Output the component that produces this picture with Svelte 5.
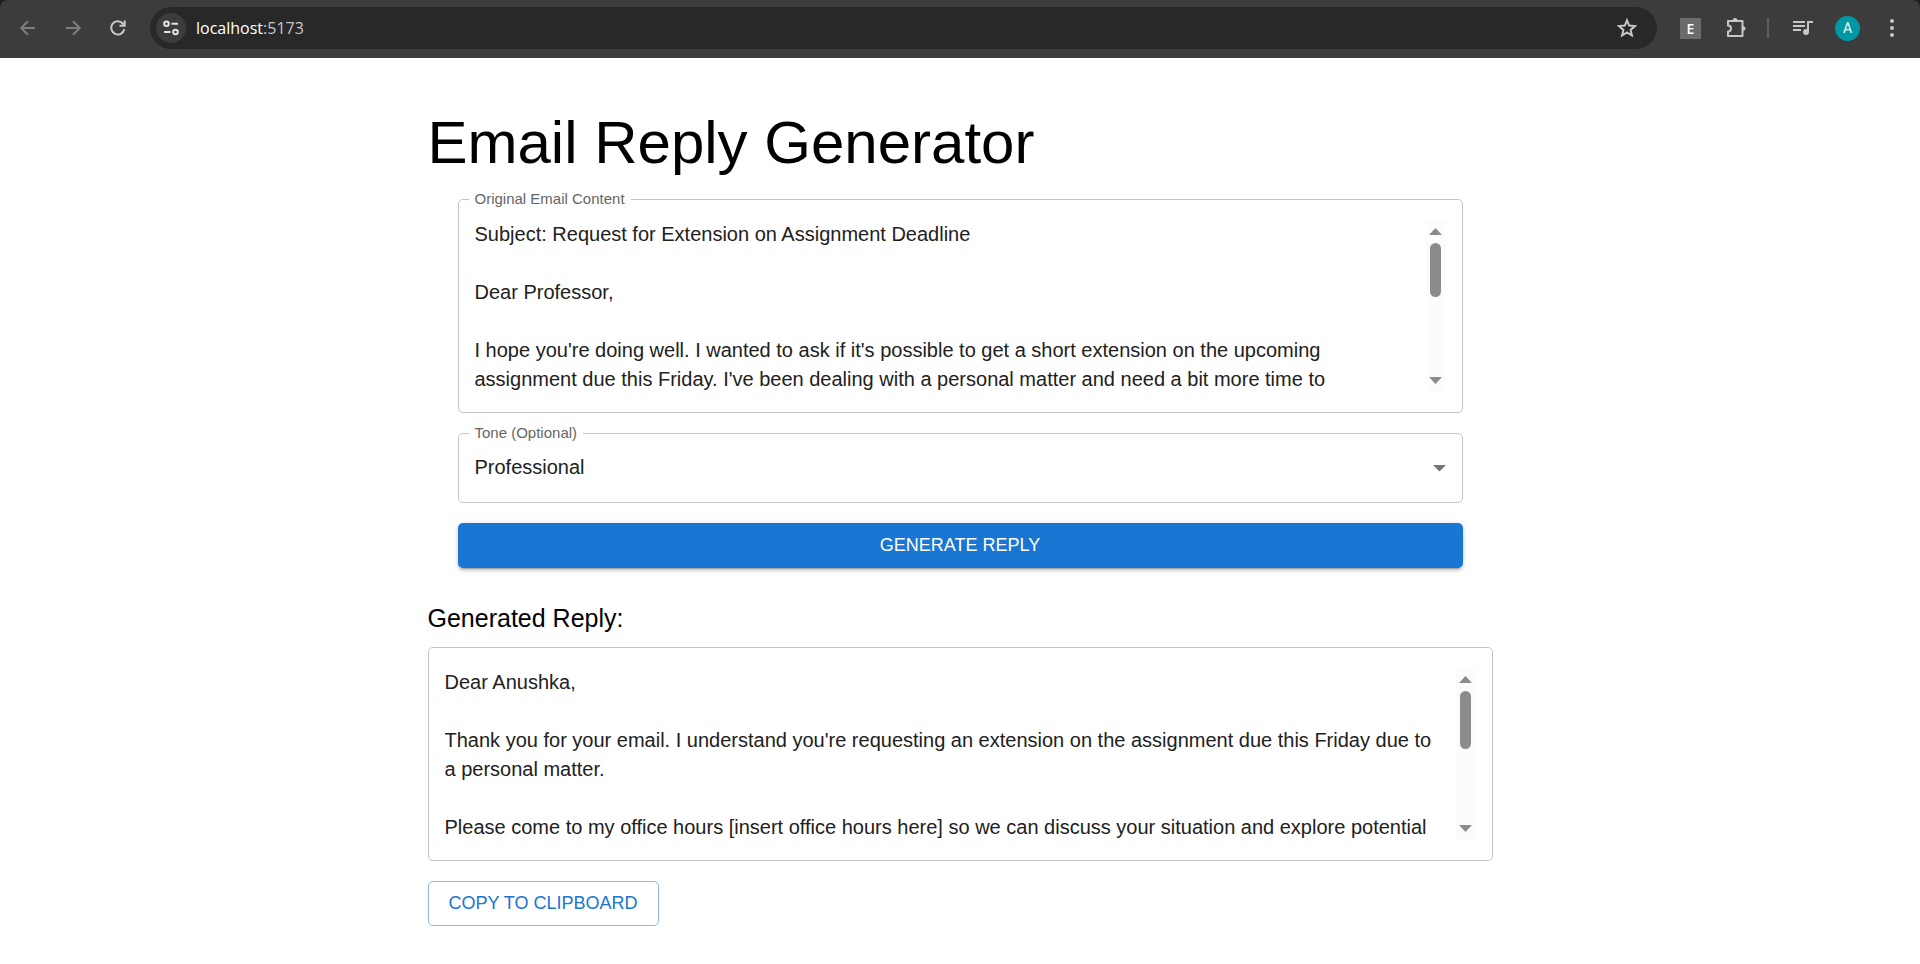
<script>
  let email = $state(
    [
      'Subject: Request for Extension on Assignment Deadline',
      '',
      'Dear Professor,',
      '',
      "I hope you're doing well. I wanted to ask if it's possible to get a short extension on the upcoming",
      "assignment due this Friday. I've been dealing with a personal matter and need a bit more time to"
    ].join('\n')
  );
  let tone = $state('Professional');
  const reply = [
    'Dear Anushka,',
    '',
    "Thank you for your email. I understand you're requesting an extension on the assignment due this Friday due to",
    'a personal matter.',
    '',
    'Please come to my office hours [insert office hours here] so we can discuss your situation and explore potential'
  ].join('\n');
</script>

{#snippet scrollbar(thumb)}
  <div class="scrollbar" aria-hidden="true">
    <svg width="13" height="7" viewBox="0 0 13 7"><path d="M0 7 6.5 0 13 7z" /></svg>
    <span class="thumb" style="height: {thumb}px"></span>
    <svg class="down" width="13" height="7" viewBox="0 0 13 7"><path d="M0 0 6.5 7 13 0z" /></svg>
  </div>
{/snippet}

<div class="frame">
  <header class="toolbar">
    <button class="icon dim" aria-label="Back">
      <svg width="16" height="16" viewBox="0 0 16 16"><path d="M15 8H1.5M8 1.2 1.2 8 8 14.8" /></svg>
    </button>
    <button class="icon dim" aria-label="Forward">
      <svg width="16" height="16" viewBox="0 0 16 16"><path d="M1 8h13.500M8 1.200 14.800 8 8 14.800" /></svg>
    </button>
    <button class="icon" aria-label="Reload">
      <svg width="16" height="16" viewBox="0 0 16 16"><path d="M14.300 9.300A6.600 6.600 0 1 1 12.800 3.500L14.600 5.400M14.700 .5v5.200H9.500" /></svg>
    </button>
    <div class="address">
      <button class="site" aria-label="Site information">
        <svg width="16" height="16" viewBox="0 0 16 16">
          <circle cx="3.500" cy="3.800" r="2.300" /><path d="M8.500 3.800H15M1 12h6.500" /><circle cx="12.500" cy="12" r="2.300" />
        </svg>
      </button>
      <span class="url">localhost<span>:5173</span></span>
      <button class="icon star" aria-label="Bookmark">
        <svg width="20" height="20" viewBox="0 0 20 20"><path d="M10 2.300 12.200 7.600 18 8.100 13.600 11.900 14.900 17.500 10 14.500 5.100 17.500 6.400 11.900 2 8.100 7.800 7.600z" /></svg>
      </button>
    </div>
    <div class="tools">
      <button class="ext" aria-label="Extension">E</button>
      <button class="icon" aria-label="Extensions">
        <svg width="22" height="22" viewBox="0 0 22 22">
          <path d="M3 4h14.500v15H3v-4.500a3 3 0 0 0 0-6z" stroke-linejoin="round" /><path class="solid" d="M7.500 3.500a2.500 2.500 0 0 1 5 0zM18 9a2.500 2.500 0 0 1 0 5z" />
        </svg>
      </button>
      <span class="divider"></span>
      <button class="icon" aria-label="Media controls">
        <svg width="20" height="16" viewBox="0 0 20 16"><path d="M0 2h12M0 6h12M0 10h8M15 12V2h5" /><circle class="solid" cx="13" cy="12" r="3" /></svg>
      </button>
      <button class="avatar" aria-label="Profile">A</button>
      <button class="icon" aria-label="Menu">
        <svg width="6" height="20" viewBox="0 0 6 20"><g class="solid"><circle cx="3" cy="3" r="2" /><circle cx="3" cy="10" r="2" /><circle cx="3" cy="17" r="2" /></g></svg>
      </button>
    </div>
  </header>
</div>

<main>
  <h1>Email Reply Generator</h1>
  <form onsubmit={(e) => e.preventDefault()}>
    <div class="field">
      <label for="email">Original Email Content</label>
      <textarea id="email" bind:value={email}></textarea>
      {@render scrollbar(54)}
    </div>
    <div class="field select">
      <label for="tone">Tone (Optional)</label>
      <select id="tone" bind:value={tone}>
        <option>None</option>
        <option>Professional</option>
        <option>Casual</option>
        <option>Friendly</option>
      </select>
      <svg class="caret" width="13" height="7" viewBox="0 0 13 7" aria-hidden="true"><path d="M0 0 6.500 6.500 13 0z" /></svg>
    </div>
    <button class="primary">Generate Reply</button>
  </form>
  <h2 id="reply-title">Generated Reply:</h2>
  <div class="field">
    <textarea aria-labelledby="reply-title" readonly value={reply}></textarea>
    {@render scrollbar(58)}
  </div>
  <button class="outlined" onclick={() => navigator.clipboard.writeText(reply)}>Copy to Clipboard</button>
</main>

<style>
  :global(body) {
    margin: 0;
    background: #fff;
  }
  :global(#app) {
    font-family: "Liberation Sans", Arial, sans-serif;
  }
  button,
  textarea,
  select {
    font-family: inherit;
    margin: 0;
  }
  button {
    cursor: pointer;
  }
  svg {
    display: block;
  }

  .frame {
    background: #1f1f1f;
  }
  .toolbar {
    box-sizing: border-box;
    height: 58px;
    display: flex;
    align-items: center;
    padding: 0 12px 2px 12px;
    background: #3c3c3c;
    border-radius: 8px 8px 0 0;
  }
  .icon {
    display: flex;
    align-items: center;
    justify-content: center;
    flex: none;
    width: 32px;
    height: 32px;
    margin-right: 13px;
    padding: 0;
    border: 0;
    background: none;
    color: #c7c7c7;
  }
  .dim {
    color: #7d7d7d;
  }
  .toolbar svg {
    fill: none;
    stroke: currentColor;
    stroke-width: 2;
  }
  .toolbar .solid {
    fill: currentColor;
    stroke: none;
  }
  .address {
    flex: 1;
    display: flex;
    align-items: center;
    box-sizing: border-box;
    height: 42px;
    margin-left: 3px;
    padding: 0 14px 0 6px;
    border-radius: 21px;
    background: #282828;
  }
  .site {
    display: flex;
    align-items: center;
    justify-content: center;
    width: 30px;
    height: 30px;
    padding: 0;
    border: 0;
    border-radius: 50%;
    background: #3c3c3c;
    color: #e3e3e3;
  }
  .url {
    flex: 1;
    margin-left: 10px;
    color: #fff;
    font: 16px/24px "Open Sans", sans-serif;
  }
  .url span {
    color: #c7c7c7;
  }
  .star {
    margin: 0;
  }
  .tools {
    display: flex;
    align-items: center;
    margin-left: 23px;
  }
  .tools .icon {
    margin: 0;
  }
  .ext {
    width: 21px;
    height: 21px;
    margin-right: 19px;
    padding: 0;
    border: 0;
    background: #6b6b6b;
    color: #fff;
    font: 600 14px/21px "Open Sans", sans-serif;
  }
  .divider {
    width: 2px;
    height: 20px;
    margin: 0 18px 0 15px;
    background: #5f5f5f;
  }
  .avatar {
    width: 25px;
    height: 25px;
    margin: 0 16px;
    padding: 0;
    border: 0;
    border-radius: 50%;
    background: #0097a7;
    color: #fff;
    font: 400 14px/25px Roboto, sans-serif;
  }

  main {
    box-sizing: border-box;
    max-width: 1125px;
    margin: 0 auto;
    padding: 50px 30px 38px;
  }
  h1 {
    margin: 0;
    font-size: 60px;
    line-height: 70px;
    font-weight: 400;
    color: #000;
  }
  form {
    display: flex;
    flex-direction: column;
    gap: 20px;
    padding: 21px 30px 0;
  }
  .field {
    position: relative;
    display: flex;
    padding: 20px 17px 20px 16px;
    border: 1px solid #c4c4c4;
    border-radius: 5px;
  }
  label {
    position: absolute;
    top: -10px;
    left: 10px;
    padding: 0 6px;
    background: #fff;
    color: #666;
    font-size: 15px;
    line-height: 18px;
  }
  textarea {
    flex: 1;
    min-width: 0;
    height: 172px;
    padding: 0;
    border: 0;
    outline: 0;
    resize: none;
    overflow: auto;
    scrollbar-width: none;
    background: none;
    color: #212121;
    font-size: 20px;
    line-height: 29px;
  }
  .scrollbar {
    display: flex;
    flex-direction: column;
    align-items: center;
    box-sizing: border-box;
    width: 19px;
    padding: 8px 0;
    background: #fcfcfc;
  }
  .scrollbar svg {
    fill: #8b8b8b;
  }
  .scrollbar .down {
    margin-top: auto;
  }
  .thumb {
    width: 11px;
    margin-top: 8px;
    border-radius: 6px;
    background: #8b8b8b;
  }
  .select {
    padding: 0;
  }
  select {
    flex: 1;
    height: 68px;
    padding: 0 40px 2px 16px;
    border: 0;
    outline: 0;
    appearance: none;
    background: none;
    color: #212121;
    font-size: 20px;
  }
  .caret {
    position: absolute;
    top: 31px;
    right: 16px;
    fill: #757575;
    pointer-events: none;
  }
  .primary,
  .outlined {
    box-sizing: border-box;
    height: 45px;
    border-radius: 5px;
    font-size: 18px;
    text-transform: uppercase;
  }
  .primary {
    border: 0;
    background: #1976d2;
    color: #fff;
    box-shadow: 0 4px 1px -3px rgba(0, 0, 0, 0.2), 0 3px 3px 0 rgba(0, 0, 0, 0.14), 0 1px 6px 0 rgba(0, 0, 0, 0.12);
  }
  h2 {
    margin: 30px 0 9px;
    font-size: 25px;
    line-height: 40px;
    font-weight: 400;
    color: #000;
  }
  .outlined {
    margin-top: 20px;
    padding: 0 20px;
    border: 1px solid #8cbae8;
    background: #fff;
    color: #1976d2;
  }
</style>
